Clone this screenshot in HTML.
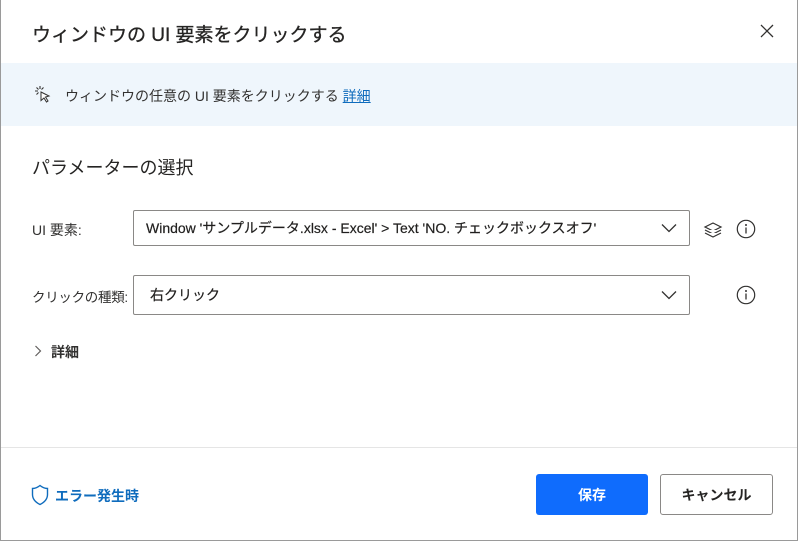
<!DOCTYPE html>
<html><head><meta charset="utf-8"><style>
*{margin:0;padding:0;box-sizing:border-box}
body{width:800px;height:543px;background:#fff;font-family:"Liberation Sans","Noto Sans CJK JP",sans-serif;color:#252423;position:relative;overflow:hidden}
.frame{position:absolute;left:0;top:0;width:798px;height:541px;border:1px solid #9a9a9a;border-top:none}
.abs{position:absolute;white-space:nowrap}
.banner{position:absolute;left:1px;top:63px;width:796px;height:63px;background:#eff6fc}
.box{position:absolute;border:1px solid #8a8886;border-radius:2px;background:#fff;font-size:14px;padding-left:12px;display:flex;align-items:center;color:#201f1e;-webkit-text-stroke:0.2px #201f1e}
.chev{position:absolute;right:12px;top:50%;margin-top:-5px}
.btn{position:absolute;height:41px;border-radius:3px;font-size:14px;display:flex;align-items:center;justify-content:center}
</style></head><body>
<div class="frame"></div>
<div class="abs" style="left:32px;top:20px;font-size:19px;color:#252423;-webkit-text-stroke:0.3px #252423">ウィンドウの UI 要素をクリックする</div>
<svg class="abs" style="left:760px;top:24px" width="14" height="14" viewBox="0 0 14 14"><path d="M1 1L13 13M13 1L1 13" stroke="#323130" stroke-width="1.3"/></svg>
<div class="banner"></div>
<svg class="abs" style="left:34px;top:85px" width="18" height="20" viewBox="0 0 18 20"><path d="M6 1v3M1 6h3M2.5 2.5l2 2M9.5 2.5l-2 2M2.5 9.5l2-2" stroke="#323130" stroke-width="1.1"/><path d="M7 7l8 4-3.5 1 2.5 4-1.5 1-2.5-4-3 2.5z" fill="#fff" stroke="#323130" stroke-width="1"/></svg>
<div class="abs" style="left:65px;top:86px;font-size:14px;color:#323130">ウィンドウの任意の UI 要素をクリックする <span style="color:#0f6cbd;text-decoration:underline">詳細</span></div>
<div class="abs" style="left:32px;top:154px;font-size:18px">パラメーターの選択</div>
<div class="abs" style="left:32px;top:220px;font-size:14px;color:#323130">UI 要素:</div>
<div class="box" style="left:133px;top:210px;width:557px;height:36px">Window 'サンプルデータ.xlsx - Excel' &gt; Text 'NO. チェックボックスオフ'
<svg class="chev" width="16" height="10" viewBox="0 0 16 10"><path d="M1 1.5l7 7 7-7" fill="none" stroke="#323130" stroke-width="1.3"/></svg></div>
<svg class="abs" style="left:703px;top:219px" width="20" height="20" viewBox="0 0 20 20" fill="#fff" stroke="#323130" stroke-width="1.2"><path d="M10 12l8-4-8-4-8 4z"/><path d="M2 11l8 4 8-4"/><path d="M2 14l8 4 8-4"/></svg>
<svg class="abs" style="left:736px;top:219px" width="20" height="20" viewBox="0 0 20 20"><circle cx="10" cy="10" r="8.7" fill="none" stroke="#323130" stroke-width="1.2"/><circle cx="10" cy="6" r="1" fill="#323130"/><path d="M10 8.5v6" stroke="#323130" stroke-width="1.3"/></svg>
<div class="abs" style="left:32px;top:286px;font-size:13.5px;letter-spacing:-0.3px;color:#323130">クリックの種類:</div>
<div class="box" style="left:133px;top:275px;width:557px;height:40px;padding-left:16px">右クリック
<svg class="chev" width="16" height="10" viewBox="0 0 16 10"><path d="M1 1.5l7 7 7-7" fill="none" stroke="#323130" stroke-width="1.3"/></svg></div>
<svg class="abs" style="left:736px;top:285px" width="20" height="20" viewBox="0 0 20 20"><circle cx="10" cy="10" r="8.7" fill="none" stroke="#323130" stroke-width="1.2"/><circle cx="10" cy="6" r="1" fill="#323130"/><path d="M10 8.5v6" stroke="#323130" stroke-width="1.3"/></svg>
<svg class="abs" style="left:34px;top:345px" width="8" height="12" viewBox="0 0 8 12"><path d="M1.5 1l5 5-5 5" fill="none" stroke="#605e5c" stroke-width="1.2"/></svg>
<div class="abs" style="left:51px;top:342px;font-size:14px;font-weight:bold;color:#323130">詳細</div>
<div class="abs" style="left:1px;top:447px;width:796px;height:1px;background:#e5e5e5"></div>
<svg class="abs" style="left:31px;top:484px" width="18" height="22" viewBox="0 0 18 22"><path d="M9 1.5C6.5 3.5 4 4.5 1.5 4.5v6c0 5 3.5 8 7.5 10 4-2 7.5-5 7.5-10v-6C14 4.5 11.5 3.5 9 1.5z" fill="none" stroke="#0f6cbd" stroke-width="1.4"/></svg>
<div class="abs" style="left:55px;top:486px;font-size:14px;font-weight:bold;color:#0f6cbd">エラー発生時</div>
<div class="btn" style="left:536px;top:474px;width:112px;background:#0f6cfd;color:#fff;font-weight:bold">保存</div>
<div class="btn" style="left:660px;top:474px;width:113px;border:1px solid #8a8886;background:#fff;color:#252423;font-weight:bold">キャンセル</div>
</body></html>
